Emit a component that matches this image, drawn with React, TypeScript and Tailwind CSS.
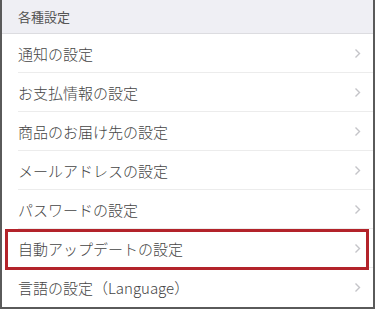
const ITEMS = [
  '通知の設定',
  'お支払情報の設定',
  '商品のお届け先の設定',
  'メールアドレスの設定',
  'パスワードの設定',
  '自動アップデートの設定',
  '言語の設定（Language）',
]

const HIGHLIGHT = 5

function Chevron() {
  return (
    <svg width="7" height="11" viewBox="0 0 7 11" className="shrink-0">
      <path d="M1.5 1.5 L5.5 5.5 L1.5 9.5" fill="none" stroke="#c4c4c8" strokeWidth="1.4" />
    </svg>
  )
}

export default function App() {
  return (
    <div
      className="w-[375px] h-[309px] overflow-hidden bg-white border-l-2 border-r-2 border-b-2 border-[#5a5a5a]"
      style={{ fontFamily: '"Noto Sans CJK JP", "Noto Sans", sans-serif' }}
    >
      {/* header */}
      <div className="h-[34px] bg-[#efeff4] border-b border-[#dcdce0] flex items-center pl-4 text-[13px] text-[#555]">
        各種設定
      </div>

      {ITEMS.map((label, i) => (
        <div key={label} className="relative h-[39px] pl-4">
          <div
            className={`h-full flex items-center justify-between pr-3 ${
              i < ITEMS.length - 1 ? 'border-b border-[#ececec]' : ''
            }`}
          >
            <span className="text-[15px] text-[#444] font-light leading-none">{label}</span>
            <Chevron />
          </div>
          {i === HIGHLIGHT && (
            <div className="absolute left-[3px] right-[4px] top-0 bottom-[-2px] border-[3px] border-[#b3232a] pointer-events-none" />
          )}
        </div>
      ))}
    </div>
  )
}
